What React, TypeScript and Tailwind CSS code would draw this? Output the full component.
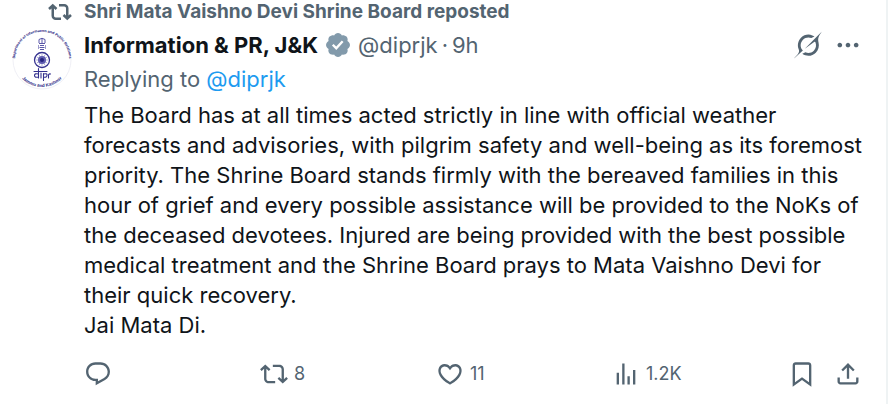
import type { ReactNode } from "react";

type IconProps = { path: string; className?: string; viewBox?: string };

function Icon({ path, className = "size-7", viewBox = "0 0 24 24" }: IconProps) {
  return (
    <svg viewBox={viewBox} className={`shrink-0 ${className}`} fill="currentColor" aria-hidden="true">
      <path d={path} />
    </svg>
  );
}

const icons = {
  reposted:
    "M4.75 3.79l4.603 4.3-1.706 1.82L6 8.38v7.37c0 .97.784 1.75 1.75 1.75H13V20H7.75c-2.347 0-4.25-1.9-4.25-4.25V8.38L1.853 9.91.147 8.09l4.603-4.3zm11.5 2.71H11V4h5.25c2.347 0 4.25 1.9 4.25 4.25v7.37l1.647-1.53 1.706 1.82-4.603 4.3-4.603-4.3 1.706-1.82L18 15.62V8.25c0-.97-.784-1.75-1.75-1.75z",
  verified:
    "M20.396 11c-.018-.646-.215-1.275-.57-1.816-.354-.54-.852-.972-1.438-1.246.223-.607.27-1.264.14-1.897-.131-.634-.437-1.218-.882-1.687-.47-.445-1.053-.75-1.687-.882-.633-.13-1.29-.083-1.897.14-.273-.587-.704-1.086-1.245-1.44S11.647 1.62 11 1.604c-.646.017-1.273.213-1.813.568s-.969.854-1.24 1.44c-.608-.223-1.267-.272-1.902-.14-.635.13-1.22.436-1.69.882-.445.47-.749 1.055-.878 1.688-.13.633-.08 1.29.144 1.896-.587.274-1.087.705-1.443 1.245-.356.54-.555 1.17-.574 1.817.02.647.218 1.276.574 1.817.356.54.856.972 1.443 1.245-.224.606-.274 1.263-.144 1.896.13.634.433 1.218.877 1.688.47.443 1.054.747 1.687.878.633.132 1.29.084 1.897-.136.274.586.705 1.084 1.246 1.439.54.354 1.17.551 1.816.569.647-.016 1.276-.213 1.817-.567s.972-.854 1.245-1.44c.604.239 1.266.296 1.903.164.636-.132 1.22-.447 1.68-.907.46-.46.776-1.044.908-1.681s.075-1.299-.165-1.903c.586-.274 1.084-.705 1.439-1.246.354-.54.551-1.17.569-1.816zM9.662 14.85l-3.429-3.428 1.293-1.302 2.072 2.072 4.4-4.794 1.347 1.246z",
  grok:
    "M12.745 20.54l10.97-8.19c.539-.4 1.307-.244 1.564.38 1.349 3.288.746 7.241-1.938 9.955-2.683 2.714-6.417 3.31-9.83 1.954l-3.728 1.745c5.347 3.697 11.84 2.782 15.898-1.324 3.219-3.255 4.216-7.692 3.284-11.693l.008.009c-1.351-5.878.332-8.227 3.782-13.031L33 0l-4.54 4.59v-.014L12.743 20.544m-2.263 1.987c-3.837-3.707-3.175-9.446.1-12.755 2.42-2.449 6.388-3.448 9.852-1.979l3.72-1.737c-.67-.49-1.53-1.017-2.515-1.387-4.455-1.854-9.789-.931-13.41 2.728-3.483 3.523-4.579 8.94-2.697 13.561 1.405 3.454-.899 5.898-3.22 8.364C1.49 30.2.666 31.074 0 32l10.478-9.466",
  more:
    "M3 12c0-1.1.9-2 2-2s2 .9 2 2-.9 2-2 2-2-.9-2-2zm9 2c1.1 0 2-.9 2-2s-.9-2-2-2-2 .9-2 2 .9 2 2 2zm7 0c1.1 0 2-.9 2-2s-.9-2-2-2-2 .9-2 2 .9 2 2 2z",
  reply:
    "M1.751 10c0-4.42 3.584-8 8.005-8h4.366c4.49 0 8.129 3.64 8.129 8.13 0 2.96-1.607 5.68-4.196 7.11l-8.054 4.46v-3.69h-.067c-4.49.1-8.183-3.51-8.183-8.01zm8.005-6c-3.317 0-6.005 2.69-6.005 6 0 3.37 2.77 6.08 6.138 6.01l.351-.01h1.761v2.3l5.087-2.81c1.951-1.08 3.163-3.13 3.163-5.36 0-3.39-2.744-6.13-6.129-6.13H9.756z",
  repost:
    "M4.5 3.88l4.432 4.14-1.364 1.46L5.5 7.55V16c0 1.1.896 2 2 2H13v2H7.5c-2.209 0-4-1.79-4-4V7.55L1.432 9.48.068 8.02 4.5 3.88zM16.5 6H11V4h5.5c2.209 0 4 1.79 4 4v8.45l2.068-1.93 1.364 1.46-4.432 4.14-4.432-4.14 1.364-1.46 2.068 1.93V8c0-1.1-.896-2-2-2z",
  like:
    "M16.697 5.5c-1.222-.06-2.679.51-3.89 2.16l-.805 1.09-.806-1.09C9.984 6.01 8.526 5.44 7.304 5.5c-1.243.07-2.349.78-2.91 1.91-.552 1.12-.633 2.78.479 4.82 1.074 1.97 3.257 4.27 7.129 6.61 3.87-2.34 6.052-4.64 7.126-6.61 1.111-2.04 1.03-3.7.477-4.82-.561-1.13-1.666-1.84-2.908-1.91zm4.187 7.69c-1.351 2.48-4.001 5.12-8.379 7.67l-.503.3-.504-.3c-4.379-2.55-7.029-5.19-8.382-7.67-1.36-2.5-1.41-4.86-.514-6.67.887-1.79 2.647-2.91 4.601-3.01 1.651-.09 3.368.56 4.798 2.01 1.429-1.45 3.146-2.1 4.796-2.01 1.954.1 3.714 1.22 4.601 3.01.896 1.81.846 4.17-.514 6.67z",
  views: "M8.75 21V3h2v18h-2zM18 21V8.5h2V21h-2zM4 21l.004-10h2L6 21H4zm9.248 0v-7h2v7h-2z",
  bookmark:
    "M4 4.5C4 3.12 5.119 2 6.5 2h11C18.881 2 20 3.12 20 4.5v18.44l-8-5.71-8 5.71V4.5zM6.5 4c-.276 0-.5.22-.5.5v14.56l6-4.29 6 4.29V4.5c0-.28-.224-.5-.5-.5h-11z",
  share:
    "M12 2.59l5.7 5.7-1.41 1.42L13 6.41V16h-2V6.41l-3.3 3.3-1.41-1.42L12 2.59zM21 15l-.02 3.51c0 1.38-1.12 2.49-2.5 2.49H5.5C4.11 21 3 19.88 3 18.5V15h2v3.5c0 .28.22.5.5.5h12.98c.28 0 .5-.22.5-.5L19 15h2z",
};

const spokes = Array.from({ length: 12 }, (_, i) => i * 30);

function Avatar() {
  return (
    <svg viewBox="0 0 60 60" className="size-15" role="img" aria-label="Information & PR, J&K">
      <defs>
        <path id="ring-top" d="M3.500 34A27 27 0 1 1 56.500 34" />
        <path id="ring-bottom" d="M2 29A28 28 0 0 0 58 29" />
      </defs>
      <circle cx="30" cy="30" r="29" fill="#fff" stroke="#f0f0f6" />
      <g fill="#25227f" fontFamily="Liberation Sans, sans-serif" fontWeight="700" textAnchor="middle">
        <text fontSize="3.700">
          <textPath href="#ring-top" startOffset="50%">Department of Information and Public Relations</textPath>
        </text>
        <text fontSize="4.500">
          <textPath href="#ring-bottom" startOffset="50%">Jammu and Kashmir</textPath>
        </text>
      </g>
      <g fill="none" stroke="#5a57a8" strokeWidth="1">
        <path d="M27 9.500q3-2.500 6 0M27 9.500v3.500M33 9.500v3.500M30 8v6M27 13.500h6M28 15.500h4M27.500 17.500h5M28 19.500h4" />
        <path d="M26.500 15v4M33.500 15v4" strokeWidth="0.600" />
      </g>
      <circle cx="30" cy="30" r="7.500" fill="#fff" stroke="#34318f" strokeWidth="1.300" />
      <g stroke="#6b69b5" strokeWidth="0.500">
        {spokes.map((a) => (
          <path key={a} d="M30 30V24" transform={`rotate(${a} 30 30)`} />
        ))}
      </g>
      <circle cx="30" cy="30" r="4" fill="#5f5db0" />
      <circle cx="30" cy="30" r="2" fill="#25227f" />
      <g fill="none" stroke="#34318f" strokeWidth="1.100" strokeLinecap="round">
        <path d="M22 41.500H35M26.500 38.500v9.500M26.500 44q-4-1-4 1.500t4 1.500M29 43v5M31.500 43.500v7M31.500 44q4-1 3.500 1.500t-3.500 1.500M36.500 48v-3q.5-1.500 2-1" />
      </g>
    </svg>
  );
}

function Action({ label, path, count }: { label: string; path: string; count?: string }) {
  return (
    <button type="button" aria-label={label} className="flex items-center gap-1.5">
      <Icon path={path} />
      {count && <span className="text-lg leading-7">{count}</span>}
    </button>
  );
}

function ProfileLink({ className, children }: { className?: string; children: ReactNode }) {
  return (
    <a href="#diprjk" className={className}>
      {children}
    </a>
  );
}

export default function App() {
  return (
    <main className="min-h-screen border-r-2 border-[#eff3f4] bg-white pr-6 pb-4 pl-3 font-['Inter','Liberation_Sans',sans-serif] text-[#536471]">
      <article className="grid grid-cols-[60px_minmax(0,1fr)] gap-x-3">
        <div className="flex h-6 items-center justify-end">
          <Icon path={icons.reposted} className="size-6" />
        </div>
        <p className="text-[19px] leading-6 font-bold">Shri Mata Vaishno Devi Shrine Board reposted</p>

        <div className="pt-1.5">
          <Avatar />
        </div>
        <div className="pt-1.5">
          <header className="flex h-[30px] items-center justify-between">
            <div className="flex items-center text-[22px]">
              <ProfileLink className="font-bold text-[#0f1419]">Information &amp; PR, J&amp;K</ProfileLink>
              <Icon path={icons.verified} viewBox="0 0 22 22" className="mx-1.5 size-7 text-[#829aab]" />
              <ProfileLink>@diprjk</ProfileLink>
              <span className="px-1">·</span>
              <time>9h</time>
            </div>
            <div className="flex items-center gap-3">
              <button type="button" aria-label="Grok actions">
                <Icon path={icons.grok} viewBox="0 0 33 32" className="size-7" />
              </button>
              <button type="button" aria-label="More">
                <Icon path={icons.more} />
              </button>
            </div>
          </header>

          <p className="pt-1 text-[22px] leading-[30px]">
            Replying to <ProfileLink className="text-[#1d9bf0]">@diprjk</ProfileLink>
          </p>

          <p className="-mr-1.5 pt-1.5 text-[22px] leading-[30px] text-[#0f1419]">
            The Board has at all times acted strictly in line with official weather forecasts and advisories, with
            pilgrim safety and well-being as its foremost priority. The Shrine Board stands firmly with the bereaved
            families in this hour of grief and every possible assistance will be provided to the NoKs of the deceased
            devotees. Injured are being provided with the best possible medical treatment and the Shrine Board prays to
            Mata Vaishno Devi for their quick recovery.
            <br />
            Jai Mata Di.
          </p>

          <footer className="flex items-center pt-5">
            <div className="grid flex-1 grid-cols-4">
              <Action label="Reply" path={icons.reply} />
              <Action label="Repost" path={icons.repost} count="8" />
              <Action label="Like" path={icons.like} count="11" />
              <Action label="Views" path={icons.views} count="1.2K" />
            </div>
            <div className="flex gap-4.5">
              <button type="button" aria-label="Bookmark">
                <Icon path={icons.bookmark} />
              </button>
              <button type="button" aria-label="Share">
                <Icon path={icons.share} />
              </button>
            </div>
          </footer>
        </div>
      </article>
    </main>
  );
}
